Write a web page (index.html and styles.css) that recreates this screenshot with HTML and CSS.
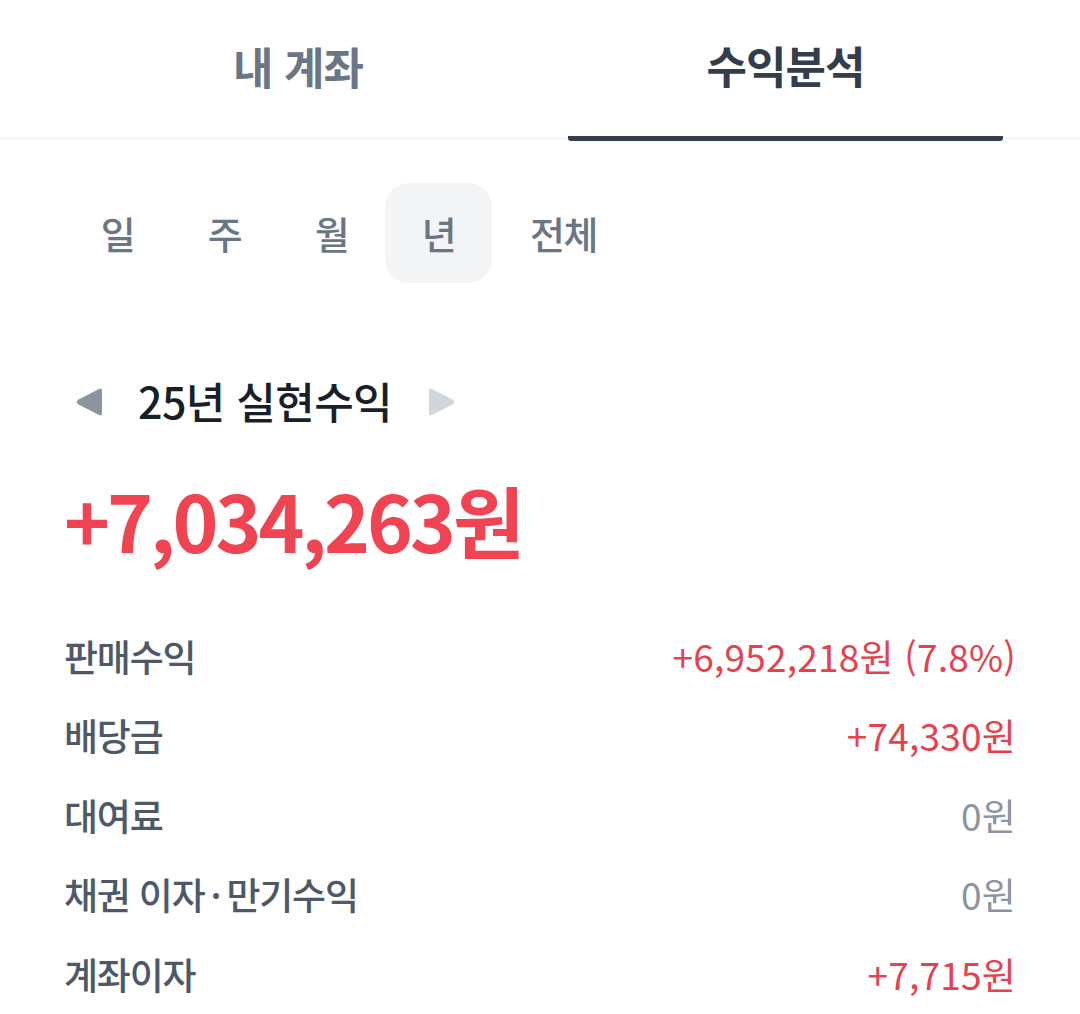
FILE: index.html
```html
<!DOCTYPE html>
<html lang="ko">
<head>
<meta charset="utf-8">
<link rel="stylesheet" href="styles.css">
</head>
<body>
<div class="tabs">
  <div class="tab">내 계좌</div>
  <div class="tab active">수익분석</div>
</div>
<div class="periods">
  <div class="period">일</div>
  <div class="period">주</div>
  <div class="period">월</div>
  <div class="period selected">년</div>
  <div class="period wide">전체</div>
</div>
<div class="title-row">
  <svg class="arrow" width="28" height="30" viewBox="0 0 28 30"><path d="M27 4 L27 26 Q27 29.5 24 28 L3 17.3 Q0.5 15 3 12.7 L24 2 Q27 0.5 27 4 Z" fill="#8b95a1"/></svg>
  <div class="title">25년 실현수익</div>
  <svg class="arrow" width="28" height="30" viewBox="0 0 28 30"><path d="M1 4 L1 26 Q1 29.5 4 28 L25 17.3 Q27.5 15 25 12.7 L4 2 Q1 0.5 1 4 Z" fill="#d1d6db"/></svg>
</div>
<div class="total">+7,034,263원</div>
<div class="rows">
  <div class="row"><span class="label">판매수익</span><span class="value red">+6,952,218원 (7.8%)</span></div>
  <div class="row"><span class="label">배당금</span><span class="value red">+74,330원</span></div>
  <div class="row"><span class="label">대여료</span><span class="value gray">0원</span></div>
  <div class="row"><span class="label">채권 이자<span class="dot">·</span>만기수익</span><span class="value gray">0원</span></div>
  <div class="row"><span class="label">계좌이자</span><span class="value red">+7,715원</span></div>
</div>
</body>
</html>
```
FILE: styles.css
```css
html, body {
  margin: 0;
  padding: 0;
  background: #ffffff;
}
body {
  font-family: "Noto Sans CJK KR", "Noto Sans", sans-serif;
  width: 1080px;
  overflow: hidden;
}
.tabs {
  display: grid;
  grid-template-columns: 540px 435px;
  padding-left: 28px;
  height: 138px;
  border-bottom: 1px solid #eef0f2;
}
.tab {
  display: flex;
  align-items: center;
  justify-content: center;
  font-size: 44px;
  font-weight: 700;
  letter-spacing: -1px;
  color: #6b7684;
  padding-bottom: 6px;
}
.tab.active {
  color: #333d4b;
  border-bottom: 5px solid #333d4b;
  border-radius: 0 0 3px 3px;
  margin-bottom: -3px;
}
.periods {
  display: flex;
  margin-top: 44px;
  padding-left: 64px;
}
.period {
  width: 107px;
  height: 100px;
  display: flex;
  align-items: center;
  justify-content: center;
  font-size: 38px;
  font-weight: 500;
  color: #6b7684;
  border-radius: 24px;
  letter-spacing: -1.5px;
  padding-bottom: 2px;
  box-sizing: border-box;
}
.period.wide {
  width: 143px;
}
.period.selected {
  background: #f2f4f6;
}
.title-row {
  display: flex;
  align-items: center;
  margin-top: 97px;
  padding-left: 75px;
  height: 44px;
}
.title-row .arrow {
  flex: none;
}
.title {
  font-size: 43px;
  font-weight: 500;
  color: #191f28;
  letter-spacing: -0.6px;
  margin: 0 36px 0 35px;
  padding-bottom: 4px;
}
.total {
  margin-top: 50px;
  padding-left: 64px;
  font-size: 78px;
  font-weight: 700;
  color: #f04452;
  letter-spacing: -3px;
  line-height: 90px;
}
.rows {
  margin-top: 52px;
  padding: 0 64px;
}
.row {
  display: flex;
  justify-content: space-between;
  align-items: center;
  height: 79.5px;
}
.label {
  color: #4e5968;
  font-weight: 500;
  font-size: 37px;
  letter-spacing: -1.2px;
}
.label .dot {
  margin: 0 6px;
}
.value {
  font-weight: 400;
  font-size: 37px;
  letter-spacing: 0.2px;
}
.value.red {
  color: #e5424d;
}
.value.gray {
  color: #8b95a1;
}
```
